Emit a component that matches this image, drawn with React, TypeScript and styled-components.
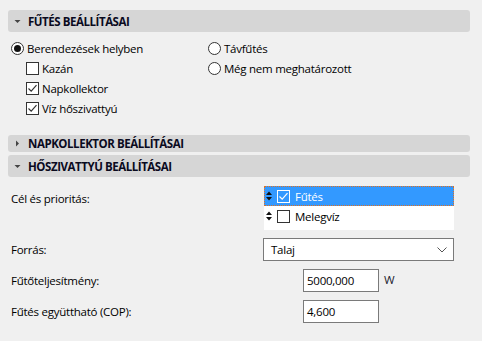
import React from "react";
import styled, { createGlobalStyle } from "styled-components";

const Global = createGlobalStyle`
  html, body { margin: 0; padding: 0; background: #f0f0f0; }
  body { font-family: "Open Sans", "Noto Sans", sans-serif; font-size: 11.5px; letter-spacing: -0.25px; color: #000; }
  * { box-sizing: border-box; }
`;

const Page = styled.div`
  width: 482px;
  height: 341px;
  padding: 10px 12px 0 8px;
  display: flex;
  flex-direction: column;
`;

const Header = styled.div<{ $h: number; $mt: number }>`
  height: ${(p) => p.$h}px;
  margin-top: ${(p) => p.$mt}px;
  background: #d6d6d6;
  border-radius: 3px;
  display: flex;
  align-items: center;
  padding-left: 5px;
  gap: 6px;
  font-weight: 700;
  font-size: 11.5px;
  letter-spacing: -0.45px;
  color: #0a0a1e;
`;

const Tri = styled.svg`
  width: 9px;
  height: 9px;
  flex: none;
`;

const OptionsGrid = styled.div`
  display: grid;
  grid-template-columns: 197px 1fr;
  grid-auto-rows: 20px;
  margin-top: 6px;
  padding-left: 3px;
`;

const Item = styled.label<{ $indent?: boolean }>`
  display: flex;
  align-items: center;
  gap: 3px;
  padding-left: ${(p) => (p.$indent ? 15 : 0)}px;
  white-space: nowrap;
`;

const RadioCircle = styled.span<{ $on?: boolean }>`
  width: 13px;
  height: 13px;
  border-radius: 50%;
  border: 1px solid #333;
  background: #fff;
  display: flex;
  align-items: center;
  justify-content: center;
  flex: none;
  &::after {
    content: "";
    width: 7px;
    height: 7px;
    border-radius: 50%;
    background: ${(p) => (p.$on ? "#111" : "transparent")};
  }
`;

const Box = styled.span<{ $inverse?: boolean }>`
  width: 13px;
  height: 13px;
  border: 1px solid ${(p) => (p.$inverse ? "#fff" : "#333")};
  background: ${(p) => (p.$inverse ? "transparent" : "#fff")};
  display: flex;
  align-items: center;
  justify-content: center;
  flex: none;
`;

const Form = styled.div`
  display: grid;
  grid-template-columns: 252px 191px;
  margin-top: 9px;
  padding-left: 3px;
  row-gap: 8px;
  align-items: center;
`;

const Label = styled.div`
  white-space: nowrap;
`;

const ListLabel = styled(Label)`
  align-self: start;
  margin-top: 5px;
`;

const ListBox = styled.div`
  background: #fff;
  height: 44px;
  width: 190px;
  margin-left: 1px;
`;

const ListRow = styled.div<{ $sel?: boolean }>`
  height: 20px;
  display: flex;
  align-items: center;
  gap: 5px;
  padding-left: 2px;
  background: ${(p) => (p.$sel ? "#3399ff" : "transparent")};
  color: ${(p) => (p.$sel ? "#fff" : "#000")};
  outline: ${(p) => (p.$sel ? "1px dotted #e07020" : "none")};
  outline-offset: -1px;
`;

const Select = styled.div`
  height: 23px;
  width: 191px;
  border: 1px solid #7a7a7a;
  background: #fff;
  display: flex;
  align-items: center;
  justify-content: space-between;
  padding: 0 6px 0 7px;
`;

const InputRow = styled.div`
  display: flex;
  align-items: center;
  gap: 5px;
  padding-left: 40px;
`;

const Input = styled.div`
  width: 76px;
  height: 23px;
  border: 1px solid #7a7a7a;
  background: #fff;
  display: flex;
  align-items: center;
  padding-left: 3px;
`;

const Unit = styled.span`
  color: #1a1a2e;
  margin-top: -2px;
`;

const Down = () => (
  <Tri viewBox="0 0 9 9">
    <path d="M1.5 3 H7.5 L4.5 6 Z" fill="#444" />
  </Tri>
);
const Right = () => (
  <Tri viewBox="0 0 9 9">
    <path d="M3 1.5 V7.5 L6 4.5 Z" fill="#444" />
  </Tri>
);

const Check = ({ color = "#333" }: { color?: string }) => (
  <svg width="11" height="11" viewBox="0 0 11 11">
    <path d="M1.5 5.5 L4.2 8.2 L9.5 2.2" fill="none" stroke={color} strokeWidth="1.2" />
  </svg>
);

const Spin = ({ color }: { color: string }) => (
  <svg width="6" height="10" viewBox="0 0 6 10">
    <path d="M0 4 L3 0.5 L6 4 Z M0 6 L3 9.5 L6 6 Z" fill={color} />
  </svg>
);

const Chevron = () => (
  <svg width="10" height="6" viewBox="0 0 10 6">
    <path d="M0.5 0.5 L5 5 L9.5 0.5" fill="none" stroke="#555" strokeWidth="1" />
  </svg>
);

export default function App() {
  return (
    <>
      <Global />
      <Page>
        <Header $h={22} $mt={0}>
          <Down />
          FŰTÉS BEÁLLÍTÁSAI
        </Header>
        <OptionsGrid>
          <Item>
            <RadioCircle $on />
            Berendezések helyben
          </Item>
          <Item>
            <RadioCircle />
            Távfűtés
          </Item>
          <Item $indent>
            <Box />
            Kazán
          </Item>
          <Item>
            <RadioCircle />
            Még nem meghatározott
          </Item>
          <Item $indent>
            <Box>
              <Check />
            </Box>
            Napkollektor
          </Item>
          <span />
          <Item $indent>
            <Box>
              <Check />
            </Box>
            Víz hőszivattyú
          </Item>
        </OptionsGrid>
        <Header $h={17} $mt={17}>
          <Right />
          NAPKOLLEKTOR BEÁLLÍTÁSAI
        </Header>
        <Header $h={22} $mt={3}>
          <Down />
          HŐSZIVATTYÚ BEÁLLÍTÁSAI
        </Header>
        <Form>
          <ListLabel>Cél és prioritás:</ListLabel>
          <ListBox>
            <ListRow $sel>
              <Spin color="#111" />
              <Box $inverse>
                <Check color="#fff" />
              </Box>
              Fűtés
            </ListRow>
            <ListRow>
              <Spin color="#111" />
              <Box />
              Melegvíz
            </ListRow>
          </ListBox>
          <Label>Forrás:</Label>
          <Select>
            Talaj
            <Chevron />
          </Select>
          <Label>Fűtőteljesítmény:</Label>
          <InputRow>
            <Input>5000,000</Input>
            <Unit>W</Unit>
          </InputRow>
          <Label>Fűtés együttható (COP):</Label>
          <InputRow>
            <Input>4,600</Input>
          </InputRow>
        </Form>
      </Page>
    </>
  );
}
